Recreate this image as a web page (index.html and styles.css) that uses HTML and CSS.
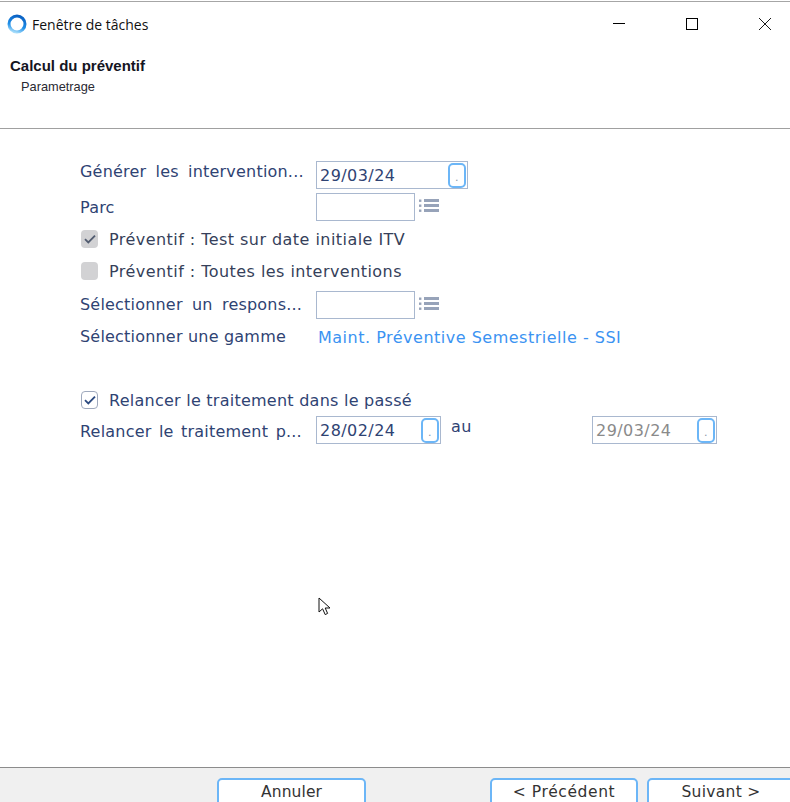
FILE: index.html
```html
<!DOCTYPE html>
<html lang="fr">
<head>
<meta charset="utf-8">
<title>Fenêtre de tâches</title>
<link rel="stylesheet" href="styles.css">
</head>
<body>
<div class="window">
  <header class="head">
    <div class="titlebar">
      <svg class="logo" width="20" height="20" viewBox="0 0 20 20"><defs><linearGradient id="lg" x1="0.6" y1="0" x2="0.3" y2="1"><stop offset="0" stop-color="#0b62c4"/><stop offset="0.6" stop-color="#1f8fe8"/><stop offset="1" stop-color="#a5dcfa"/></linearGradient></defs><circle cx="10" cy="10" r="8" fill="none" stroke="url(#lg)" stroke-width="3"/></svg>
      <span class="wintitle">Fenêtre de tâches</span>
      <div class="winctl">
        <svg width="12" height="12" viewBox="0 0 12 12"><path d="M0 5.5H12" stroke="#000" fill="none"/></svg>
        <svg width="12" height="12" viewBox="0 0 12 12"><rect x="0.5" y="0.5" width="11" height="11" stroke="#000" fill="none"/></svg>
        <svg width="12" height="12" viewBox="0 0 12 12"><path d="M0 0L12 12M12 0L0 12" stroke="#000" fill="none" stroke-width="0.9"/></svg>
      </div>
    </div>
    <div class="heading">Calcul du préventif</div>
    <div class="subheading">Parametrage</div>
  </header>

  <main class="form">
    <div class="row">
      <label class="lbl sp-a">Générer les intervention...</label>
      <div class="field w152"><span class="val">29/03/24</span><span class="pick">.</span></div>
    </div>
    <div class="row">
      <label class="lbl lbl-low">Parc</label>
      <div class="field w99"></div>
      <svg class="listicon" width="21" height="16" viewBox="0 0 21 16"><g fill="#97a3b9"><rect x="1" y="1.5" width="2.4" height="2.4"/><rect x="1" y="6.5" width="2.4" height="2.4"/><rect x="1" y="11.5" width="2.4" height="2.4"/><rect x="6" y="1" width="15" height="3"/><rect x="6" y="6" width="15" height="3"/><rect x="6" y="11" width="15" height="3"/></g></svg>
    </div>
    <div class="row">
      <span class="box box-off"><svg width="12" height="10" viewBox="0 0 12 10"><path d="M1 5.2L4.3 8.4L11 1.6" fill="none" stroke="#525c70" stroke-width="1.8"/></svg></span>
      <span class="chk-text dim">Préventif : Test sur date initiale ITV</span>
    </div>
    <div class="row">
      <span class="box box-off"></span>
      <span class="chk-text dim">Préventif : Toutes les interventions</span>
    </div>
    <div class="row mt2">
      <label class="lbl sp-b">Sélectionner un respons...</label>
      <div class="field w99"></div>
      <svg class="listicon" width="21" height="16" viewBox="0 0 21 16"><g fill="#97a3b9"><rect x="1" y="1.5" width="2.4" height="2.4"/><rect x="1" y="6.5" width="2.4" height="2.4"/><rect x="1" y="11.5" width="2.4" height="2.4"/><rect x="6" y="1" width="15" height="3"/><rect x="6" y="6" width="15" height="3"/><rect x="6" y="11" width="15" height="3"/></g></svg>
    </div>
    <div class="row">
      <label class="lbl">Sélectionner une gamme</label>
      <span class="link">Maint. Préventive Semestrielle - SSI</span>
    </div>
    <div class="row mt31">
      <span class="box box-on"><svg width="12" height="10" viewBox="0 0 12 10"><path d="M1 5.2L4.3 8.4L11 1.6" fill="none" stroke="#2c4a80" stroke-width="1.8"/></svg></span>
      <span class="chk-text chk-tight">Relancer le traitement dans le passé</span>
    </div>
    <div class="row tight">
      <label class="lbl sp-c">Relancer le traitement p...</label>
      <div class="field w125"><span class="val">28/02/24</span><span class="pick">.</span></div>
      <span class="au">au</span>
      <div class="field w125 field-off"><span class="val">29/03/24</span><span class="pick">.</span></div>
    </div>
  </main>

  <footer class="foot">
    <button class="btn btn-cancel">Annuler</button>
    <button class="btn btn-prev">&lt; Précédent</button>
    <button class="btn btn-next">Suivant &gt;</button>
  </footer>

  <svg class="cursor" width="14" height="20" viewBox="0 0 14 20"><path d="M1 1V15L4.6 11.8L7.2 17.6L9.6 16.4L7.2 11H12Z" fill="#fff" stroke="#111" stroke-width="1"/></svg>
</div>
</body>
</html>
```
FILE: styles.css
```css
* { box-sizing: border-box; }
html, body { margin: 0; padding: 0; background: #fff; }
.window {
  position: relative;
  width: 790px;
  height: 802px;
  overflow: hidden;
  display: flex;
  flex-direction: column;
  font-family: "DejaVu Sans", sans-serif;
  font-size: 16px;
  letter-spacing: 0.45px;
  color: #2f4373;
}
.head {
  height: 128px;
  flex: none;
  margin-top: 1px;
  border-top: 1px solid #a6a6a6;
  border-bottom: 1px solid #a0a0a0;
  letter-spacing: 0;
}
.titlebar {
  height: 44px;
  display: flex;
  align-items: center;
  padding-left: 7px;
}
.logo { flex: none; }
.wintitle {
  margin-left: 5px;
  font-family: "Open Sans", sans-serif;
  font-size: 14px;
  color: #111;
}
.winctl {
  margin-left: auto;
  display: flex;
  gap: 61px;
  padding-right: 19px;
}
.heading {
  margin: 11px 0 0 10px;
  font-family: "Liberation Sans", sans-serif;
  font-weight: 700;
  font-size: 15px;
  line-height: 18px;
  color: #15151f;
}
.subheading {
  margin: 4px 0 0 21px;
  font-family: "Liberation Sans", sans-serif;
  font-size: 12.8px;
  line-height: 15px;
  color: #2a2a33;
}
.form {
  flex: 1;
  padding: 32px 0 0 80px;
  display: flex;
  flex-direction: column;
  gap: 4px;
}
.row {
  height: 28px;
  display: flex;
  align-items: center;
  flex: none;
}
.mt2 { margin-top: 2px; }
.mt31 { margin-top: 31px; }
.tight { margin-top: -2px; }
.lbl {
  width: 236px;
  flex: none;
  white-space: nowrap;
  letter-spacing: 0.2px;
  position: relative;
  top: -1px;
}
.lbl-low { top: 0; }
.sp-a { word-spacing: 4px; top: -4px; }
.sp-b { word-spacing: 4px; }
.sp-c { word-spacing: 2.2px; top: 1px; }
.field {
  height: 28px;
  flex: none;
  border: 1px solid #a9b8cf;
  display: flex;
  align-items: center;
  padding: 0 1px 0 3px;
  background: #fff;
}
.w99 { width: 99px; }
.w125 { width: 125px; }
.w152 { width: 152px; }
.field-off { margin-left: 126px; color: #8a8a8a; }
.val { flex: 1; position: relative; top: 0; }
.pick {
  width: 18px;
  height: 25px;
  flex: none;
  border: 2px solid #6cb6f7;
  border-radius: 5px;
  color: #8b96a8;
  font-size: 11px;
  text-align: center;
  line-height: 25px;
}
.listicon { margin-left: 3px; flex: none; position: relative; top: -1px; }
.box {
  width: 17px;
  height: 18px;
  flex: none;
  margin-left: 1px;
  border-radius: 4px;
  display: flex;
  align-items: center;
  justify-content: center;
}
.box-off { background: #d2d2d4; }
.box-on { background: #fff; border: 1px solid #9fa9bd; }
.chk-text { margin-left: 11px; white-space: nowrap; }
.chk-tight { letter-spacing: 0.25px; }
.dim { color: #363f5a; }
.link { color: #3b93f2; margin-left: 2px; letter-spacing: 0.5px; white-space: nowrap; }
.au { margin-left: 10px; position: relative; top: -4px; width: 15px; }
.foot {
  height: 35px;
  flex: none;
  position: relative;
  background: #f0f0f0;
  border-top: 1px solid #8c8c8c;
  display: flex;
  padding: 10px 0 0 217px;
}
.btn {
  height: 30px;
  flex: none;
  padding: 0 0 2px;
  background: #fff;
  border: 2px solid #6cb6f7;
  border-radius: 5px;
  font-family: "DejaVu Sans", sans-serif;
  font-size: 15.5px;
  letter-spacing: 0.1px;
  color: #333;
}
.btn-cancel { width: 149px; }
.btn-prev { width: 148px; margin-left: 124px; letter-spacing: 0.6px; }
.btn-next { width: 148px; margin-left: 9px; letter-spacing: 0.3px; }
.cursor { position: absolute; left: 318px; top: 597px; }
```
